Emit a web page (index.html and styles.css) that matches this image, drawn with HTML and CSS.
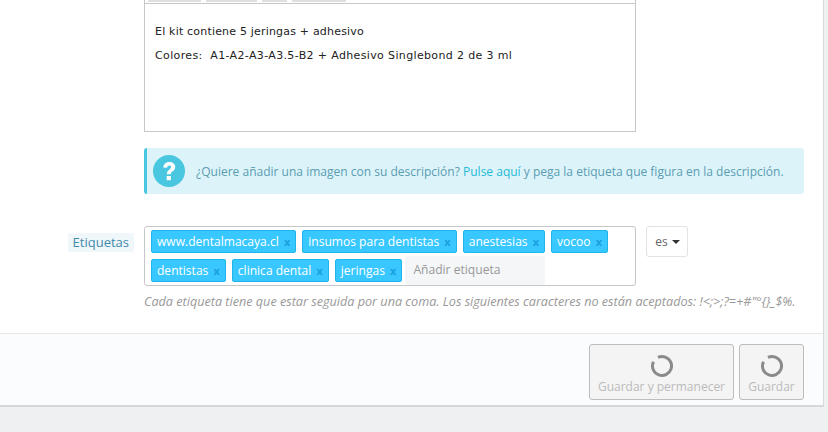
FILE: index.html
```html
<!DOCTYPE html>
<html lang="es">
<head>
<meta charset="utf-8">
<title>Etiquetas</title>
<link rel="stylesheet" href="styles.css">
</head>
<body>
<main class="panel">
  <div class="form">
    <div class="field">
      <div class="label-col"></div>
      <div class="editor">
        <div class="toolbar">
          <span class="tool tool-a"></span><span class="tool tool-b"></span><span class="tool tool-c"></span><span class="tool tool-d"></span>
        </div>
        <div class="editor-body">
          <p class="line-one">El kit contiene 5 jeringas + adhesivo</p>
          <p class="line-two">Colores:&nbsp; A1-A2-A3-A3.5-B2 + Adhesivo Singlebond 2 de 3 ml</p>
        </div>
      </div>
    </div>
    <div class="field info-field">
      <div class="label-col"></div>
      <div class="info">
        <svg class="info-icon" viewBox="0 0 32 32" width="32" height="32" aria-hidden="true">
          <circle cx="16" cy="16" r="16" fill="#4ac7e0"/>
          <path d="M10.2 12.4C10.6 8.9 13 7 16.3 7c3.4 0 5.900 2 5.900 5 0 2.400-1.300 3.500-2.800 4.600-1.100.8-1.500 1.300-1.500 2.600h-4c0-2.500.8-3.600 2.500-4.800 1.100-.8 1.700-1.300 1.700-2.300 0-1-.7-1.700-1.800-1.700-1.200 0-2 .8-2.200 2.300z" fill="#fff"/>
          <rect x="13.700" y="21" width="4.200" height="4.200" fill="#fff"/>
        </svg>
        <p class="info-text">¿Quiere añadir una imagen con su descripción? <a class="link">Pulse aquí</a> y pega la etiqueta que figura en la descripción.</p>
      </div>
    </div>
    <div class="field tags-field">
      <div class="label-col"><span class="label">Etiquetas</span></div>
      <div class="tags-col">
        <div class="tags-row">
          <div class="tags-box">
            <span class="tag">www.dentalmacaya.cl <b class="x">x</b></span>
            <span class="tag">insumos para dentistas <b class="x">x</b></span>
            <span class="tag">anestesias <b class="x">x</b></span>
            <span class="tag">vocoo <b class="x">x</b></span>
            <span class="tag">dentistas <b class="x">x</b></span>
            <span class="tag">clinica dental <b class="x">x</b></span>
            <span class="tag">jeringas <b class="x">x</b></span>
            <span class="tag-input">Añadir etiqueta</span>
          </div>
          <button class="lang">es <i class="caret"></i></button>
        </div>
        <p class="hint">Cada etiqueta tiene que estar seguida por una coma. Los siguientes caracteres no están aceptados: !&lt;;&gt;;?=+#"°{}_$%.</p>
      </div>
    </div>
  </div>
  <footer class="footer">
    <button class="save save-long"><svg class="spin" viewBox="0 0 24 24" aria-hidden="true"><circle cx="12" cy="12" r="9.500" transform="rotate(-115 12 12)"/></svg>Guardar y permanecer</button>
    <button class="save save-short"><svg class="spin" viewBox="0 0 24 24" aria-hidden="true"><circle cx="12" cy="12" r="9.500" transform="rotate(-115 12 12)"/></svg>Guardar</button>
  </footer>
</main>
</body>
</html>
```
FILE: styles.css
```css
* { box-sizing: border-box; }
html, body { margin: 0; height: 432px; overflow: hidden; }
body { background: #eff0f2; font-family: "Open Sans", sans-serif; font-size: 12px; color: #666; }
p { margin: 0; }
.panel { width: 824px; height: 407px; background: #fff; border-right: 1px solid #d8dadd; border-bottom: 2px solid #d5d8db; display: flex; flex-direction: column; }
.form { height: 334px; border-bottom: 1px solid #e8e8e8; }
.field { display: flex; }
.label-col { width: 144px; flex: none; }
.editor { width: 492px; height: 132px; border: 1px solid #c7c7c7; border-top: 0; background: #fff; }
.toolbar { height: 4px; border-bottom: 1px solid #c7c7c7; display: flex; padding-left: 3px; gap: 5px; }
.tool { height: 2px; background: #e0e0e0; display: block; }
.tool-a { width: 53px; }
.tool-b { width: 51px; }
.tool-c { width: 25px; }
.tool-d { width: 54px; }
.editor-body { padding: 20px 10px 0; font-family: "DejaVu Sans", sans-serif; font-size: 11px; line-height: 16px; color: #222; }
.editor-body p { margin-bottom: 8px; }
.editor-body .line-one { letter-spacing: .19px; }
.editor-body .line-two { letter-spacing: .36px; }
.info-field { margin-top: 16px; }
.info { width: 660px; height: 46px; background: #dcf4f9; border-left: 3px solid #4ac7e0; border-radius: 3px; display: flex; align-items: center; padding-left: 6px; }
.info-icon { flex: none; margin-right: 11px; }
.info-text { color: #5b9cb2; white-space: nowrap; font-size: 12.020px; }
.link { color: #25b9d7; }
.tags-field { margin-top: 32px; }
.tags-field .label-col { display: flex; justify-content: flex-end; align-items: flex-start; padding: 7px 10px 0 0; }
.label { background: #f0f7fb; color: #3f8bac; font-size: 13px; line-height: 19px; padding: 0 5px; border-radius: 2px; }
.tags-row { display: flex; align-items: flex-start; gap: 10px; }
.tags-box { width: 492px; height: 60px; border: 1px solid #c7c7c7; border-radius: 3px; padding: 3px 6px 0; display: flex; flex-wrap: wrap; align-content: flex-start; gap: 6px; }
.tag { height: 23px; background: #38c8ff; border: 1px solid #1eb6ea; border-radius: 2px; color: #fff; line-height: 21px; padding: 0 5px; white-space: nowrap; font-size: 12.050px; }
.x { color: #1a9fe0; font-weight: 700; font-size: 11px; margin-left: 2px; }
.tag-input { width: 140px; height: 29px; margin: -3px 0 0 -3px; background: #f4f6f7; border-radius: 2px; color: #999; line-height: 27px; padding-left: 8px; font-size: 12.100px; }
.lang { width: 42px; height: 31px; background: #fff; border: 1px solid #e3e3e3; border-radius: 3px; color: #666; font: 12px "Open Sans", sans-serif; padding: 0 0 0 1px; }
.caret { display: inline-block; border: 4px solid transparent; border-top-color: #333; border-bottom: 0; vertical-align: 2px; margin-left: 1px; }
.hint { margin-top: 6px; font-style: italic; color: #999; font-size: 12.640px; white-space: nowrap; }
.footer { flex: 1; background: #fbfcfe; display: flex; justify-content: flex-end; align-items: flex-start; gap: 5px; padding: 10px 19px 0 0; }
.save { height: 56px; background: #f4f4f4; border: 1px solid #bdbdbd; border-radius: 3px; color: #bbb; font: 12px "Open Sans", sans-serif; padding: 0; display: flex; flex-direction: column; align-items: center; }
.save-long { width: 145px; }
.save-short { width: 65px; }
.spin { width: 24px; height: 24px; margin: 9px 0 0; display: block; }
.spin circle { fill: none; stroke: #8a8a8a; stroke-width: 3; stroke-dasharray: 53 6.700; }
```
